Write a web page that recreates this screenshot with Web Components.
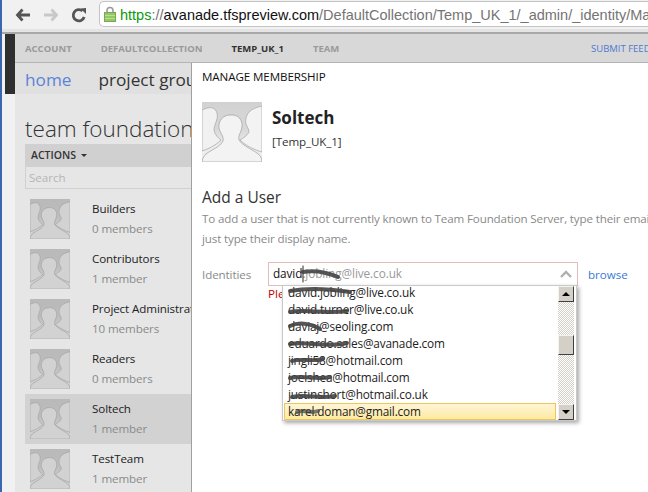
<!DOCTYPE html>
<html>
<head>
<meta charset="utf-8">
<style>
  html, body { margin: 0; padding: 0; height: 100%; overflow: hidden; }
  body { width: 648px; height: 492px; font-family: "Open Sans", "Liberation Sans", sans-serif; background: #fff; }
</style>
</head>
<body>
<x-page></x-page>

<script>
const FONT = '"Open Sans", "Liberation Sans", sans-serif';

class XAvatar extends HTMLElement {
  constructor() {
    super();
    this.attachShadow({ mode: 'open' });
  }

  connectedCallback() {
    const size = this.getAttribute('size') || 40;
    this.shadowRoot.innerHTML = `
      <style>
        :host { display: block; width: ${size}px; height: ${size}px; flex: none; }
        :host([dim]) { filter: brightness(.94) contrast(.82); }
        svg { display: block; width: 100%; height: 100%; }
      </style>
      <svg viewBox="0 0 60 60" preserveAspectRatio="none">
        <defs>
          <linearGradient id="bg" x1="0" y1="0" x2="0" y2="1">
            <stop offset="0" stop-color="#d2d2d2"/>
            <stop offset=".45" stop-color="#d8d8d8"/>
            <stop offset=".75" stop-color="#ededed"/>
          </linearGradient>
        </defs>
        <rect width="60" height="60" fill="url(#bg)"/>
        <path d="M0 8 C4 6 8 5 11 6 C15 8 16 13 15 17 C14 21 12 24 12 28 C13 33 16 36 19 38 C13 44 6 47 0 49 Z" fill="#f1f1f1" stroke="#ababab" stroke-width=".8"/>
        <path d="M60 4 C55 5 50 7 47 10 C44 14 43 18 44 22 C45 25 47 27 47 30 C45 34 41 36 38 38 C44 44 53 48 60 50 Z" fill="#f3f3f3" stroke="#ababab" stroke-width=".8"/>
        <path d="M28 13 C36 12 41 18 40 25 C39 31 36 33 37 38 C40 43 49 47 55 51 C58 53 60 56 60 60 L0 60 C0 57 2 54 4 52 C9 48 18 45 21 39 C22 34 18 31 17 26 C16 19 21 13 28 13 Z" fill="#f3f3f3" stroke="#a6a6a6" stroke-width=".8"/>
      </svg>`;
  }
}

class XBrowserBar extends HTMLElement {
  constructor() {
    super();
    this.attachShadow({ mode: 'open' });
  }

  connectedCallback() {
    this.shadowRoot.innerHTML = `
      <style>
        :host {
          display: flex; align-items: center; height: 34px; box-sizing: border-box;
          background: #f1f1f1; border-bottom: 2px solid #a8a8a8; padding: 0 0 0 13px;
          box-shadow: inset 0 -3px 0 #e4e4e4;
        }
        .btn { width: 16px; height: 16px; margin: 0 12px 2px 0; flex: none; }
        .btn svg { display: block; }
        .url {
          flex: 1; height: 26px; margin: 0 -20px 4px 0; box-sizing: border-box; padding: 2px 0 0 4px;
          display: flex; align-items: center; gap: 4px; background: #fff;
          border: 1px solid #c4c4c4; border-right: 0; border-radius: 5px 0 0 5px;
          font: 14.5px/22px "Liberation Sans", sans-serif; color: #747474; white-space: nowrap; overflow: hidden;
        }
        .url svg { margin-top: -2px; }
        .g { color: #0a9a0a; }
        .d { color: #111; }
      </style>
      <div class="btn"><svg width="16" height="16" viewBox="0 0 16 16"><path d="M7.5 2.5 L2.5 8 L7.5 13.5 M3 8 H15" fill="none" stroke="#555" stroke-width="2.8"/></svg></div>
      <div class="btn"><svg width="16" height="16" viewBox="0 0 16 16"><path d="M8.5 2.5 L13.5 8 L8.5 13.5 M13 8 H1" fill="none" stroke="#c8c8c8" stroke-width="2.8"/></svg></div>
      <div class="btn"><svg width="16" height="16" viewBox="0 0 16 16"><path d="M13.2 10 A5.6 5.6 0 1 1 11.5 4" fill="none" stroke="#555" stroke-width="2.8"/><path d="M9.5 1.5 L15 1 V7 Z" fill="#555"/></svg></div>
      <div class="url">
        <svg width="12" height="16" viewBox="0 0 12 16" style="flex:none">
          <path d="M3 7 V4.5 a3 3 0 0 1 6 0 V7" fill="none" stroke="#9a9a9a" stroke-width="1.6"/>
          <rect x="0.5" y="6.5" width="11" height="9" fill="#93c866" stroke="#7aa852"/>
          <path d="M1 9.5 H11 M1 12.5 H11" stroke="#b8e08e"/>
        </svg>
        <span><span class="g">https</span>://<span class="d">avanade.tfspreview.com</span>/DefaultCollection/Temp_UK_1/_admin/_identity/Manage</span>
      </div>`;
  }
}

class XTopNav extends HTMLElement {
  constructor() {
    super();
    this.attachShadow({ mode: 'open' });
  }

  connectedCallback() {
    this.shadowRoot.innerHTML = `
      <style>
        :host {
          display: flex; height: 29px; box-sizing: border-box; align-items: center;
          background: #d8d8d8; border-bottom: 1px solid #b4b4b4; padding: 0 0 0 10px;
          font: bold 9.5px ${FONT}; color: #9a9a9a; white-space: nowrap; overflow: hidden;
        }
        span { margin-right: 29px; }
        .on { color: #333; }
        .sub { margin: 0 0 0 auto; font-weight: normal; color: #4f79d0; width: 57px; overflow: hidden; flex: none; }
      </style>
      <span>ACCOUNT</span><span>DEFAULTCOLLECTION</span><span class="on">TEMP_UK_1</span><span>TEAM</span>
      <span class="sub">SUBMIT FEEDBACK</span>`;
  }
}

class XGroupRow extends HTMLElement {
  constructor() {
    super();
    this.attachShadow({ mode: 'open' });
  }

  connectedCallback() {
    this.shadowRoot.innerHTML = `
      <style>
        :host {
          display: flex; height: 50px; box-sizing: border-box; padding: 5px 0 0 5px; gap: 22px;
          white-space: nowrap; overflow: hidden;
        }
        :host([selected]) { background: #d2d2d2; }
        .name { font-size: 11.6px; letter-spacing: -.1px; line-height: 20px; color: #222; }
        .count { font-size: 11.6px; letter-spacing: -.1px; line-height: 20px; color: #8a8a8a; }
      </style>
      <x-avatar size="40" dim></x-avatar>
      <div>
        <div class="name">${this.getAttribute('name')}</div>
        <div class="count">${this.getAttribute('count')}</div>
      </div>`;
  }
}

class XGroupPanel extends HTMLElement {
  constructor() {
    super();
    this.attachShadow({ mode: 'open' });
  }

  connectedCallback() {
    this.shadowRoot.innerHTML = `
      <style>
        :host { display: block; padding-left: 10px; width: 176px; box-sizing: border-box; overflow: hidden; }
        h1 { margin: 0; height: 50px; box-sizing: border-box; padding-top: 17px; font: 300 22.5px/36px ${FONT}; color: #333; white-space: nowrap; }
        .actions { height: 22px; background: #d0d0d0; font: 600 10.5px/22px ${FONT}; color: #333; padding-left: 6px; display: flex; align-items: center; gap: 5px; }
        .actions i { border: 3px solid transparent; border-top: 3px solid #333; border-bottom: 0; }
        .search { height: 23px; box-sizing: border-box; border: 1px solid #d0d0d0; border-right: 0; font: 11.6px/21px ${FONT}; color: #b5b5b5; padding-left: 3px; margin-bottom: 5px; }
      </style>
      <h1>team foundation</h1>
      <div class="actions">ACTIONS <i></i></div>
      <div class="search">Search</div>
      <slot></slot>`;
  }
}

class XSuggestion extends HTMLElement {
  constructor() {
    super();
    this.attachShadow({ mode: 'open' });
  }

  connectedCallback() {
    this.shadowRoot.innerHTML = `
      <style>
        :host { display: block; height: 17px; box-sizing: border-box; padding-left: 4px; font: 11.8px/16px ${FONT}; letter-spacing: -.18px; color: #222; white-space: nowrap; }
        :host([active]) {
          background: linear-gradient(#fff6d8, #fde9a0); outline: 1px solid #eec65a; outline-offset: -1px; margin-right: 1px;
        }
      </style>
      <slot></slot>`;
  }
}

class XIdentityPicker extends HTMLElement {
  constructor() {
    super();
    this.attachShadow({ mode: 'open' });
  }

  connectedCallback() {
    // scribbles are the hand drawn redactions lying over the addresses
    this.shadowRoot.innerHTML = `
      <style>
        :host { display: block; position: relative; height: 90px; }
        .row { display: flex; align-items: center; height: 24px; }
        .label { width: 66px; font-size: 11.6px; letter-spacing: -.1px; color: #8a8a8a; }
        .input {
          width: 310px; height: 24px; box-sizing: border-box; border: 1px solid #e3bcbc; padding-left: 4px;
          font: 11.8px/21px ${FONT}; letter-spacing: -.1px; color: #999; white-space: nowrap; position: relative;
        }
        .input b { font-weight: normal; color: #111; }
        .input svg { position: absolute; right: 5px; top: 7px; }
        .browse { margin-left: 10px; font-size: 11.6px; color: #3b78d8; }
        .err { font-size: 11.6px; line-height: 16px; color: #c00000; padding-left: 66px; }
        .drop {
          position: absolute; left: 80px; top: 23px; width: 295px; height: 136px; box-sizing: border-box;
          background: #fff; border: 1px solid #c9c9c9; box-shadow: 2px 2px 4px rgba(0,0,0,.35);
          display: flex; overflow: hidden;
        }
        .items { flex: 1; padding: 0 1px; min-width: 0; margin-top: -2px; }
        .bar {
          width: 16px; flex: none; margin-right: 2px; display: flex; flex-direction: column;
          background: repeating-conic-gradient(#d4d0c8 0 25%, #fff 0 50%) 0 0 / 2px 2px;
        }
        .arrow, .thumb {
          width: 16px; height: 16px; box-sizing: border-box; background: #d4d0c8; flex: none;
          border: 1px solid; border-color: #f4f3ef #404040 #404040 #f4f3ef;
          display: flex; align-items: center; justify-content: center;
        }
        .thumb { height: 20px; margin-top: 33px; margin-bottom: auto; }
        .up { border: 4px solid transparent; border-bottom: 4px solid #000; border-top: 0; }
        .dn { border: 4px solid transparent; border-top: 4px solid #000; border-bottom: 0; }
        svg.scrawl { position: absolute; left: 0; top: 0; pointer-events: none; overflow: visible; }
        svg.scrawl path { fill: none; stroke: #444; stroke-width: 4; stroke-linecap: round; opacity: .9; filter: blur(.5px); }
      </style>
      <div class="row">
        <div class="label">Identities</div>
        <div class="input"><b>david</b>.jobling@live.co.uk
          <svg width="12" height="8" viewBox="0 0 12 8"><path d="M1 7 L6 2 L11 7" fill="none" stroke="#b0b0b0" stroke-width="2.4"/></svg>
        </div>
        <div class="browse">browse</div>
      </div>
      <div class="err">Please</div>
      <div class="drop">
        <div class="items"><slot></slot></div>
        <div class="bar">
          <div class="arrow"><i class="up"></i></div>
          <div class="thumb"></div>
          <div class="arrow"><i class="dn"></i></div>
        </div>
      </div>
      <svg class="scrawl" width="400" height="160">
        <path d="M101 4 V20" style="stroke:#111;stroke-width:1;filter:none"/>
        <path d="M101 10 C112 8 124 10 136 15" />
        <path d="M88 29 C104 26 128 27 148 30" />
        <path d="M88 50 C104 47 124 52 145 49" />
        <path d="M88 64 C96 60 108 61 118 67" />
        <path d="M88 82 C104 79 126 86 145 81" />
        <path d="M90 99 C100 96 112 100 121 97" />
        <path d="M88 116 C100 113 116 118 128 115" />
        <path d="M90 135 C104 132 118 137 133 134" />
        <path d="M95 150 C102 147 110 152 116 149" style="opacity:.7"/>
      </svg>`;
  }
}

class XManageDialog extends HTMLElement {
  constructor() {
    super();
    this.attachShadow({ mode: 'open' });
  }

  connectedCallback() {
    this.shadowRoot.innerHTML = `
      <style>
        :host {
          position: absolute; left: 189px; top: 63px; right: 0; bottom: 0; background: #fff;
          border-left: 1px solid #a0a0a0; box-sizing: border-box; padding: 6px 0 0 10px;
          font-family: ${FONT}; overflow: hidden;
        }
        .title { font-size: 11.6px; letter-spacing: -.1px; line-height: 16px; color: #111; }
        .who { display: flex; gap: 10px; margin-top: 17px; height: 59px; }
        h2 { margin: 4px 0 4px; font: bold 17px/24px ${FONT}; color: #222; }
        .team { font-size: 11.6px; letter-spacing: -.1px; line-height: 16px; color: #333; }
        h3 { margin: 25px 0 0; font: 15.5px/23px ${FONT}; color: #333; }
        p { margin: 0 0 13px; font-size: 11.6px; letter-spacing: -.14px; line-height: 20px; color: #8a8a8a; white-space: nowrap; }
      </style>
      <div class="title">MANAGE MEMBERSHIP</div>
      <div class="who">
        <x-avatar size="60"></x-avatar>
        <div>
          <h2>Soltech</h2>
          <div class="team">[Temp_UK_1]</div>
        </div>
      </div>
      <h3>Add a User</h3>
      <p>To add a user that is not currently known to Team Foundation Server, type their email address.<br>just type their display name.</p>
      <slot></slot>`;
  }
}

class XPage extends HTMLElement {
  constructor() {
    super();
    this.attachShadow({ mode: 'open' });
  }

  connectedCallback() {
    this.shadowRoot.innerHTML = `
      <style>
        :host {
          display: flex; flex-direction: column; height: 492px; width: 648px; position: relative; overflow: hidden;
          border-left: 2px solid #3b66b0; box-sizing: border-box; font-family: ${FONT}; background: #e6e6e6;
        }
        .tfs { flex: 1; display: flex; min-height: 0; padding-left: 3px; background: #f1f1f1; }
        .rail { width: 10px; height: 60px; background: #2f2f2f; flex: none; }
        .main { flex: 1; min-width: 0; background: #e6e6e6; }
        .tabs { display: flex; height: 31px; box-sizing: border-box; padding: 2px 0 0 10px; background: #e0e0e0; align-items: center; font-size: 17.2px; white-space: nowrap; overflow: hidden; }
        .tabs a { color: #5b84d6; margin-right: 27px; }
        .tabs span { color: #333; }
      </style>
      <x-browser-bar></x-browser-bar>
      <div class="tfs">
        <div class="rail"></div>
        <div class="main">
          <x-top-nav></x-top-nav>
          <div class="tabs"><a>home</a><span>project groups</span></div>
          <x-group-panel>
            <x-group-row name="Builders" count="0 members"></x-group-row>
            <x-group-row name="Contributors" count="1 member"></x-group-row>
            <x-group-row name="Project Administrators" count="10 members"></x-group-row>
            <x-group-row name="Readers" count="0 members"></x-group-row>
            <x-group-row name="Soltech" count="1 member" selected></x-group-row>
            <x-group-row name="TestTeam" count="1 member"></x-group-row>
          </x-group-panel>
        </div>
      </div>
      <x-manage-dialog>
        <x-identity-picker>
          <x-suggestion>david.jobling@live.co.uk</x-suggestion>
          <x-suggestion>david.turner@live.co.uk</x-suggestion>
          <x-suggestion>daviaj@seoling.com</x-suggestion>
          <x-suggestion>eduardo.sales@avanade.com</x-suggestion>
          <x-suggestion>jingli58@hotmail.com</x-suggestion>
          <x-suggestion>joelshea@hotmail.com</x-suggestion>
          <x-suggestion>justinshort@hotmail.co.uk</x-suggestion>
          <x-suggestion active>karel.doman@gmail.com</x-suggestion>
        </x-identity-picker>
      </x-manage-dialog>`;
  }
}

customElements.define('x-avatar', XAvatar);
customElements.define('x-browser-bar', XBrowserBar);
customElements.define('x-top-nav', XTopNav);
customElements.define('x-group-row', XGroupRow);
customElements.define('x-group-panel', XGroupPanel);
customElements.define('x-suggestion', XSuggestion);
customElements.define('x-identity-picker', XIdentityPicker);
customElements.define('x-manage-dialog', XManageDialog);
customElements.define('x-page', XPage);
</script>
</body>
</html>
